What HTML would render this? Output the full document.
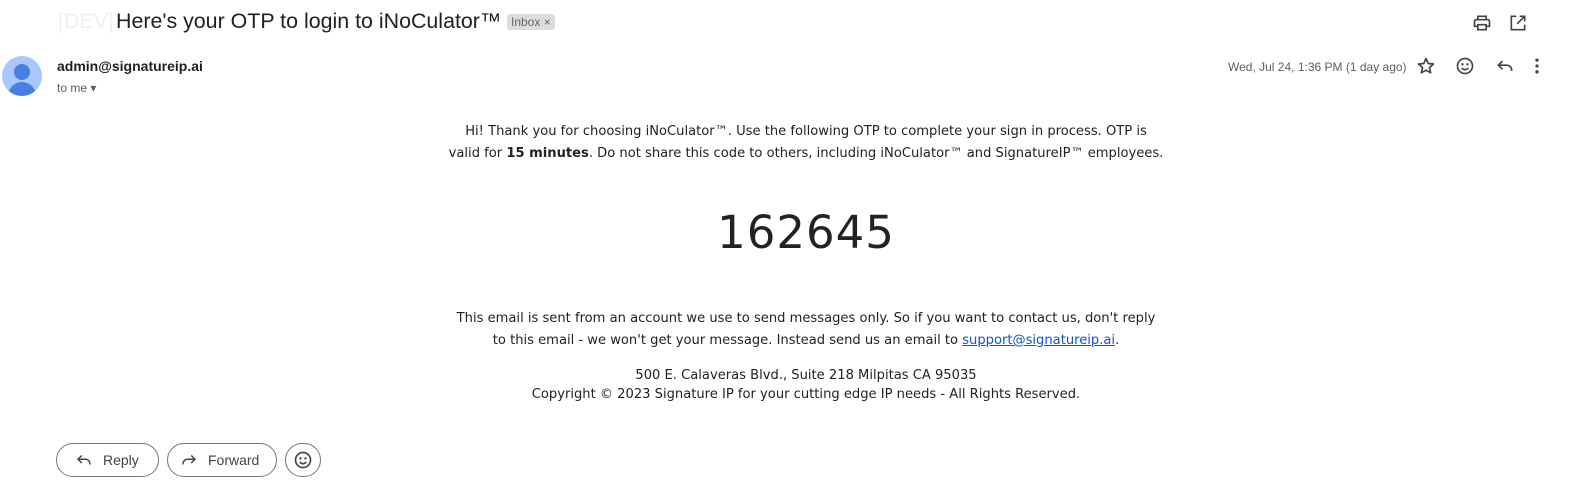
<!DOCTYPE html>
<html><head><meta charset="utf-8"><style>
body{margin:0;width:1591px;height:491px;background:#fff;font-family:"Liberation Sans",Arial,sans-serif;position:relative;overflow:hidden;color:#1f1f1f}
.abs{position:absolute}
.subj{left:116px;top:9px;font-size:21.4px;color:#1f1f1f;white-space:nowrap}
.dev{left:58px;top:9px;font-size:21.4px;color:#f0f0f0}
.tag{left:507px;top:14px;background:#ddd;color:#666;font-size:12px;padding:1px 4px;border-radius:3px}
.av{left:2px;top:56px;width:40px;height:40px;border-radius:50%;background:#a8c7fa;overflow:hidden}
.from{left:57px;top:58px;font-size:14px;font-weight:bold;color:#1f1f1f}
.tome{left:57px;top:81px;font-size:12px;color:#5e5e5e}
.date{left:1228px;top:60px;font-size:12px;color:#5e5e5e}
.body{left:356px;width:900px;text-align:center;font-family:"DejaVu Sans",Verdana,sans-serif;font-size:13.1px;color:#222;line-height:22px}
.otp{left:406px;width:800px;top:206px;text-align:center;font-family:"DejaVu Sans",Verdana,sans-serif;font-size:45px;color:#222;letter-spacing:1px}
.btn{top:443px;height:34px;border:1px solid #747775;border-radius:18px;box-sizing:border-box;font-size:14px;color:#444;display:flex;align-items:center}
a{color:#1155cc}
</style></head><body>
<div class="abs dev">[DEV]</div>
<div class="abs subj">Here's your OTP to login to iNoCulator™</div>
<div class="abs tag">Inbox ×</div>
<svg class="abs" style="left:1472px;top:13px" width="20" height="20" viewBox="0 0 24 24"><path d="M7 8V4h10v4M5 8h14a2 2 0 0 1 2 2v6h-4v4H7v-4H3v-6a2 2 0 0 1 2-2zM7 14h10v6H7z" fill="none" stroke="#444" stroke-width="2"/></svg>
<svg class="abs" style="left:1508px;top:13px" width="20" height="20" viewBox="0 0 24 24"><path d="M10 4H4v16h16v-6M14 4h6v6M20 4l-9 9" fill="none" stroke="#444" stroke-width="2"/></svg>
<div class="abs av"><div class="abs" style="left:12px;top:8px;width:16px;height:16px;border-radius:50%;background:#4a7ee0"></div><div class="abs" style="left:6px;top:26px;width:28px;height:18px;border-radius:14px 14px 0 0;background:#4a7ee0"></div></div>
<div class="abs from">admin@signatureip.ai</div>
<div class="abs tome">to me &#9662;</div>
<div class="abs date">Wed, Jul 24, 1:36 PM (1 day ago)</div>
<svg class="abs" style="left:1416px;top:56px" width="20" height="20" viewBox="0 0 24 24"><path d="M12 3l2.6 6 6.4.6-4.9 4.3 1.5 6.3L12 17l-5.6 3.2 1.5-6.3L3 9.6 9.4 9z" fill="none" stroke="#444" stroke-width="2" stroke-linejoin="round"/></svg>
<svg class="abs" style="left:1455px;top:56px" width="20" height="20" viewBox="0 0 24 24"><circle cx="12" cy="12" r="9" fill="none" stroke="#444" stroke-width="2"/><circle cx="9" cy="10" r="1.4" fill="#444"/><circle cx="15" cy="10" r="1.4" fill="#444"/><path d="M8 14.5q4 4 8 0" fill="none" stroke="#444" stroke-width="2"/></svg>
<svg class="abs" style="left:1495px;top:56px" width="20" height="20" viewBox="0 0 24 24"><path d="M9 6l-5 5 5 5M4 11h10a6 6 0 0 1 6 6v1" fill="none" stroke="#444" stroke-width="2"/></svg>
<svg class="abs" style="left:1532px;top:56px" width="10" height="20" viewBox="0 0 10 24"><circle cx="5" cy="5" r="2" fill="#444"/><circle cx="5" cy="12" r="2" fill="#444"/><circle cx="5" cy="19" r="2" fill="#444"/></svg>
<div class="abs body" style="top:121px">Hi! Thank you for choosing iNoCulator™. Use the following OTP to complete your sign in process. OTP is<br>valid for <b>15 minutes</b>. Do not share this code to others, including iNoCulator™ and SignatureIP™ employees.</div>
<div class="abs otp">162645</div>
<div class="abs body" style="top:308px">This email is sent from an account we use to send messages only. So if you want to contact us, don't reply<br>to this email - we won't get your message. Instead send us an email to <a href="#">support@signatureip.ai</a>.</div>
<div class="abs body" style="top:366px;line-height:19px">500 E. Calaveras Blvd., Suite 218 Milpitas CA 95035<br>Copyright © 2023 Signature IP for your cutting edge IP needs - All Rights Reserved.</div>
<div class="abs btn" style="left:56px;width:103px"><svg style="margin-left:18px" width="18" height="18" viewBox="0 0 24 24"><path d="M9 6l-5 5 5 5M4 11h10a6 6 0 0 1 6 6v1" fill="none" stroke="#444" stroke-width="2"/></svg><span style="margin-left:10px">Reply</span></div>
<div class="abs btn" style="left:167px;width:110px"><svg style="margin-left:12px" width="18" height="18" viewBox="0 0 24 24"><path d="M15 6l5 5-5 5M20 11H10a6 6 0 0 0-6 6v1" fill="none" stroke="#444" stroke-width="2"/></svg><span style="margin-left:10px">Forward</span></div>
<div class="abs btn" style="left:285px;width:36px;justify-content:center"><svg width="20" height="20" viewBox="0 0 24 24"><circle cx="12" cy="12" r="9" fill="none" stroke="#444" stroke-width="2"/><circle cx="9" cy="10" r="1.4" fill="#444"/><circle cx="15" cy="10" r="1.4" fill="#444"/><path d="M8 14.5q4 4 8 0" fill="none" stroke="#444" stroke-width="2"/></svg></div>
</body></html>
